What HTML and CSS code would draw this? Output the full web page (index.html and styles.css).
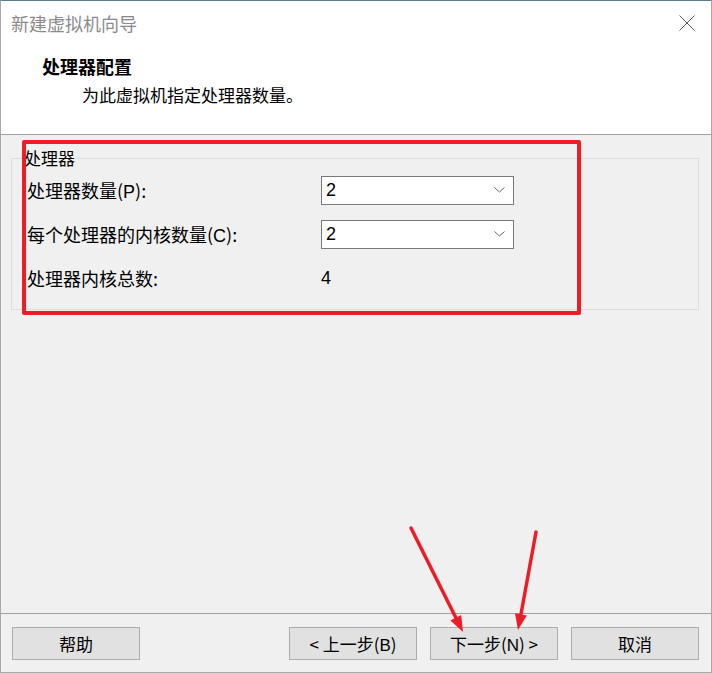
FILE: index.html
```html
<!DOCTYPE html>
<html lang="zh-CN">
  <head>
    <meta charset="UTF-8" />
    <meta name="viewport" content="width=device-width, initial-scale=1.0" />
    <title>新建虚拟机向导</title>
    <link rel="stylesheet" href="styles.css">
  </head>
  <body>
    <div class="window">
      <!-- Header -->
      <div class="header">
        <div class="titlebar">
          <span class="title">新建虚拟机向导</span>
          <svg class="close" width="16" height="16" viewBox="0 0 16 16">
            <path d="M0.5 0.5 L15.5 15.5 M15.5 0.5 L0.5 15.5" stroke="#555" stroke-width="1" fill="none" />
          </svg>
        </div>
        <div class="heading">处理器配置</div>
        <div class="subheading">为此虚拟机指定处理器数量。</div>
      </div>

      <!-- Content -->
      <div class="content">
        <fieldset class="group">
          <legend>处理器</legend>
          <div class="rows">
            <label class="label">处理器数量(<span class="latin">P</span>):</label>
            <div class="combo">
              <span class="latin">2</span>
              <svg class="chevron" width="11" height="6" viewBox="0 0 11 6">
                <path d="M0.5 0.5 L5.5 5 L10.5 0.5" stroke="#666" stroke-width="1" fill="none" />
              </svg>
            </div>

            <label class="label">每个处理器的内核数量(<span class="latin">C</span>):</label>
            <div class="combo">
              <span class="latin">2</span>
              <svg class="chevron" width="11" height="6" viewBox="0 0 11 6">
                <path d="M0.5 0.5 L5.5 5 L10.5 0.5" stroke="#666" stroke-width="1" fill="none" />
              </svg>
            </div>

            <div class="label">处理器内核总数:</div>
            <div class="value latin">4</div>
          </div>
        </fieldset>
      </div>

      <!-- Footer -->
      <div class="footer">
        <button class="btn">帮助</button>
        <div class="spacer"></div>
        <button class="btn">&lt; 上一步(<span class="latin">B</span>)</button>
        <button class="btn">下一步(<span class="latin">N</span>) &gt;</button>
        <button class="btn">取消</button>
      </div>

      <!-- Annotations -->
      <div class="mark"></div>
      <svg class="arrows" width="712" height="673" viewBox="0 0 712 673">
        <line x1="411" y1="528" x2="456" y2="618" stroke="#ee1c25" stroke-width="3.5" stroke-linecap="round" />
        <polygon points="463,632 450.4,620.4 461.2,615" fill="#ee1c25" />
        <line x1="536" y1="532" x2="521" y2="614" stroke="#ee1c25" stroke-width="3.5" stroke-linecap="round" />
        <polygon points="518,630 515,613.2 526.8,615.4" fill="#ee1c25" />
      </svg>
    </div>
  </body>
</html>
```

FILE: styles.css
```css
body {
  margin: 0;
  font-family: "Noto Sans CJK SC", "Liberation Sans", sans-serif;
  background: #f0f0f0;
}
.window {
  position: relative;
  width: 712px;
  height: 673px;
  box-sizing: border-box;
  border-top: 1px solid #5f7b8d;
  border-left: 1px solid #a8a8a8;
  border-right: 1px solid #a8a8a8;
  border-bottom: 1px solid #a8a8a8;
  display: flex;
  flex-direction: column;
  background: #f0f0f0;
}
.header {
  height: 133px;
  background: #fff;
  border-bottom: 1px solid #a0a0a0;
}
.titlebar {
  height: 44px;
  display: flex;
  align-items: center;
  justify-content: space-between;
  padding: 0 16px 0 10px;
}
.title {
  font-size: 18px;
  color: #8a8a8a;
}
.close {
  display: block;
}
.heading {
  margin-top: 9px;
  padding-left: 41px;
  font-size: 18px;
  font-weight: bold;
  line-height: 24px;
  color: #000;
}
.subheading {
  margin-top: 5px;
  padding-left: 81px;
  font-size: 17px;
  line-height: 24px;
  color: #000;
}
.content {
  flex: 1;
  padding: 12px 12px 0 10px;
}
.group {
  margin: 0;
  padding: 6px 15px 16px 15px;
  border: 1px solid #dcdcdc;
}
.group legend {
  margin-left: -4px;
  padding: 0 1px;
  font-size: 17px;
  line-height: 22px;
  color: #000;
}
.rows {
  display: grid;
  grid-template-columns: 294px 193px;
  grid-auto-rows: 30px;
  row-gap: 14px;
  align-items: center;
}
.label {
  font-size: 18px;
  color: #000;
}
.latin {
  font-family: "Liberation Sans", sans-serif;
}
.combo {
  height: 29px;
  box-sizing: border-box;
  background: #fff;
  border: 1px solid #7a7a7a;
  display: flex;
  align-items: center;
  justify-content: space-between;
  padding: 0 8px 0 4px;
  font-size: 18px;
  color: #000;
}
.chevron {
  display: block;
}
.value {
  font-size: 18px;
  color: #000;
}
.footer {
  height: 45px;
  border-top: 1px solid #a0a0a0;
  display: flex;
  align-items: flex-start;
  padding: 13px 12px 0 11px;
  gap: 13px;
}
.spacer {
  flex: 1;
}
.btn {
  width: 128px;
  height: 33px;
  background: #e1e1e1;
  border: 1px solid #adadad;
  font-family: "Noto Sans CJK SC", "Liberation Sans", sans-serif;
  font-size: 17px;
  color: #000;
  padding: 0;
}
.mark {
  position: absolute;
  left: 21px;
  top: 139px;
  width: 559px;
  height: 175px;
  box-sizing: border-box;
  border: 4px solid #ee1c25;
  border-radius: 2px;
}
.arrows {
  position: absolute;
  left: -1px;
  top: -1px;
}
```
